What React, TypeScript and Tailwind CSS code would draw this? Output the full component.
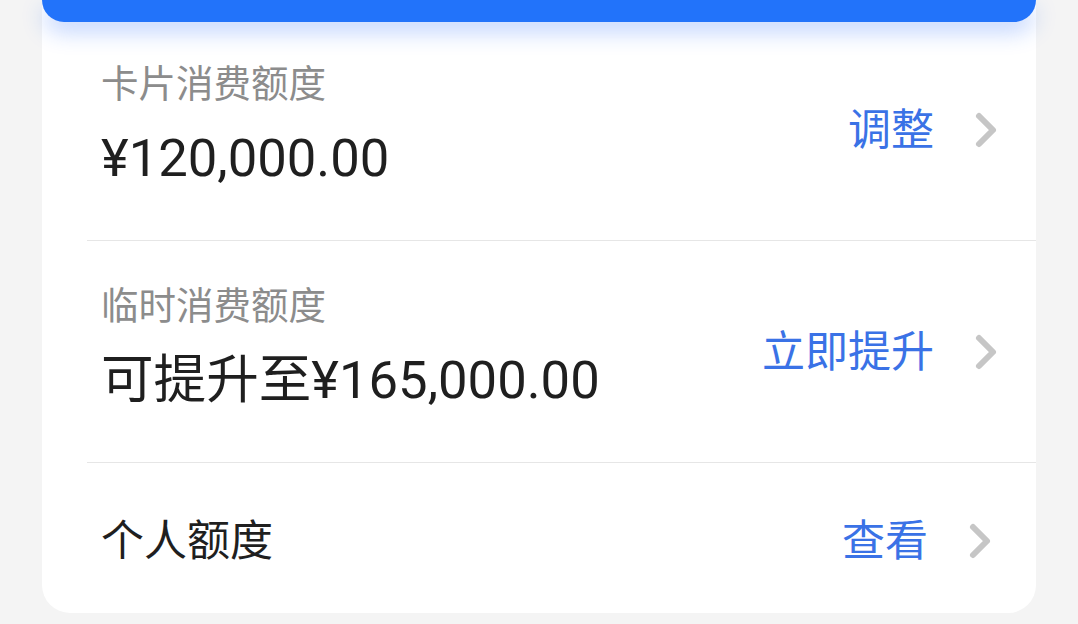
import React from 'react';

const font = { fontFamily: 'Roboto, "Noto Sans CJK SC", sans-serif' };

const Chevron: React.FC = () => (
  <svg width="24" height="38" viewBox="0 0 24 38" className="shrink-0">
    <polyline
      points="5,5 19,19 5,33"
      fill="none"
      stroke="#c6c6c6"
      strokeWidth="6"
      strokeLinecap="round"
      strokeLinejoin="round"
    />
  </svg>
);

interface LimitRowProps {
  label: string;
  value: string;
  action: string;
  first?: boolean;
}

const LimitRow: React.FC<LimitRowProps> = ({ label, value, action, first }) => (
  <div
    className={
      first
        ? '-mt-[3px] ml-[45px] flex items-center border-b border-[#e6e6e6] pl-[14px] pr-[38px]'
        : 'ml-[45px] flex items-center border-b border-[#e6e6e6] pl-[14px] pr-[38px]'
    }
  >
    <div className="flex-1 pt-[47px] pb-[55px]">
      <div className="text-[37.5px] leading-[37px] text-[#8c8c8c]">{label}</div>
      <div className="mt-[28px] text-[52.6px] leading-[54px] text-[#1f1f1f]">{value}</div>
    </div>
    <span className="text-[43px] leading-[44px] text-[#3a72e6]">{action}</span>
    <span className="ml-[40px]">
      <Chevron />
    </span>
  </div>
);

export default function App() {
  return (
    <div className="min-h-[624px] w-full bg-[#f4f4f4] px-[42px] pb-[11px]" style={font}>
      <div className="rounded-b-[28px] bg-white">
        <div className="relative z-10 h-[22px] rounded-b-[24px] bg-[#2273fa] shadow-[0_10px_22px_rgba(34,100,250,0.28)]" />
        <LimitRow label="卡片消费额度" value="¥120,000.00" action="调整" first />
        <LimitRow label="临时消费额度" value="可提升至¥165,000.00" action="立即提升" />
        <div className="ml-[45px] flex h-[150px] items-center pt-[5px] pl-[14px] pr-[44px]">
          <span className="flex-1 text-[43px] leading-[44px] text-[#1f1f1f]">个人额度</span>
          <span className="text-[43px] leading-[44px] text-[#3a72e6]">查看</span>
          <span className="ml-[40px]">
            <Chevron />
          </span>
        </div>
      </div>
    </div>
  );
}
